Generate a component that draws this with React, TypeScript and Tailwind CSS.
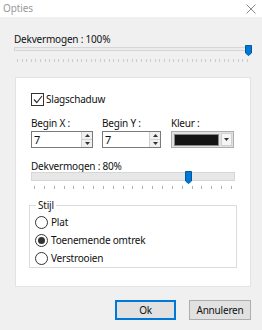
import React from "react";

const font = { fontFamily: '"Noto Sans", "Open Sans", sans-serif' };

const Ticks = ({ count, color }: { count: number; color: string }) => (
  <div className="flex justify-between px-[3px]">
    {Array.from({ length: count }).map((_, i) => (
      <div key={i} className={`w-px h-[3px] ${color}`} />
    ))}
  </div>
);

const Thumb = ({ h }: { h: number }) => (
  <svg width="7" height={h} viewBox={`0 0 7 ${h}`} className="block">
    <path d={`M0.5 0.5 H6.5 V${h - 3} L3.5 ${h - 0.5} L0.5 ${h - 3} Z`} fill="#0078d7" stroke="#005a9e" />
  </svg>
);

const Spinner = () => (
  <div className="flex flex-col w-[11px] h-full border-l border-[#d0d0d0] bg-[#f0f0f0]">
    <div className="flex-1 flex items-center justify-center border-b border-[#d0d0d0]">
      <svg width="5" height="3" viewBox="0 0 5 3"><path d="M0 3 L2.5 0 L5 3 Z" fill="#333" /></svg>
    </div>
    <div className="flex-1 flex items-center justify-center">
      <svg width="5" height="3" viewBox="0 0 5 3"><path d="M0 0 L2.5 3 L5 0 Z" fill="#333" /></svg>
    </div>
  </div>
);

const NumberBox = ({ width }: { width: string }) => (
  <div className={`${width} h-[17px] mt-px border border-[#7a7a7a] bg-white flex items-stretch`}>
    <div className="flex-1 pl-[2px] text-[11px] leading-[15px] text-[#111]">7</div>
    <Spinner />
  </div>
);

const Radio = ({ label, checked }: { label: string; checked?: boolean }) => (
  <div className="flex items-center gap-[3px] h-[18px]">
    <div className="w-[13px] h-[13px] rounded-full border border-[#333] bg-white flex items-center justify-center">
      {checked && <div className="w-[7px] h-[7px] rounded-full bg-[#333]" />}
    </div>
    <span className="text-[10px] tracking-[-0.2px] text-[#111]">{label}</span>
  </div>
);

export default function App() {
  return (
    <div className="relative w-[262px] h-[330px] overflow-hidden bg-[#f0f0f0]" style={font}>
      <div className="h-[17px] bg-white flex items-center justify-between pl-[3px] pr-[6px]">
        <span className="text-[10px] tracking-[-0.1px] text-[#9a9a9a]">Opties</span>
        <svg width="10" height="10" viewBox="0 0 10 10">
          <path d="M0.5 0.5 L9.5 9.5 M9.5 0.5 L0.5 9.5" stroke="#8a8a8a" strokeWidth="1" />
        </svg>
      </div>

      <div className="pl-[14px] pr-[11px] pt-[14px]">
        <div className="text-[10px] tracking-[-0.2px] leading-[16px] text-[#111]">Dekvermogen : 100%</div>
        <div className="relative h-[11px] -mt-[2px]">
          <div className="absolute left-0 right-0 top-[2px] h-[4px] border border-[#d6d6d6] bg-[#ececec]" />
          <div className="absolute right-[-1px] top-0">
            <Thumb h={11} />
          </div>
        </div>
        <div className="mt-[3px]">
          <Ticks count={51} color="bg-[#cccccc]" />
        </div>

        <div className="mt-[15px] ml-px w-[236px] h-[210px] bg-white border border-[#e3e3e3] pl-[15px] pt-[15px]">
          <div className="flex items-center gap-[2px] h-[13px]">
            <div className="w-[13px] h-[13px] border border-[#333] bg-white flex items-center justify-center">
              <svg width="10" height="9" viewBox="0 0 10 9">
                <path d="M1 4.5 L3.8 7.5 L9 1" fill="none" stroke="#333" strokeWidth="1.2" />
              </svg>
            </div>
            <span className="text-[10px] tracking-[-0.2px] text-[#111]">Slagschaduw</span>
          </div>

          <div className="flex mt-[10px]">
            <div className="w-[71px]">
              <div className="text-[10px] tracking-[-0.2px] leading-[14px] text-[#111]">Begin X :</div>
              <NumberBox width="w-[62px]" />
            </div>
            <div className="w-[69px]">
              <div className="text-[10px] tracking-[-0.2px] leading-[14px] text-[#111]">Begin Y :</div>
              <NumberBox width="w-[59px]" />
            </div>
            <div>
              <div className="text-[10px] tracking-[-0.2px] leading-[14px] text-[#111]">Kleur :</div>
              <div className="w-[63px] h-[17px] mt-px border border-[#adadad] bg-[#e1e1e1] flex items-center pl-[2px] pr-px gap-[2px]">
                <div className="w-[45px] h-[12px] bg-[#141414] border border-[#888]" />
                <div className="flex-1 h-[13px] bg-[#f5f5f5] border border-[#d0d0d0] flex items-center justify-center">
                  <svg width="5" height="3" viewBox="0 0 5 3"><path d="M0 0 L2.5 3 L5 0 Z" fill="#333" /></svg>
                </div>
              </div>
            </div>
          </div>

          <div className="text-[10px] tracking-[-0.2px] leading-[14px] text-[#111] mt-[11px]">Dekvermogen : 80%</div>
          <div className="relative h-[13px] w-[204px] -mt-[2px]">
            <div className="absolute left-0 right-0 top-px h-[9px] border border-[#d6d6d6] bg-[#e7e7e7]" />
            <div className="absolute left-[154px] top-0">
              <Thumb h={13} />
            </div>
          </div>
          <div className="w-[204px] mt-[2px]">
            <Ticks count={21} color="bg-[#b0b0b0]" />
          </div>

          <div className="relative mt-[16px] -ml-[2px] w-[208px] h-[63px] border border-[#dcdcdc] pl-[5px] pt-[7px]">
            <span className="absolute left-[6px] top-[-8px] bg-white px-[2px] text-[10px] tracking-[-0.2px] leading-[14px] text-[#111]">Stijl</span>
            <Radio label="Plat" />
            <Radio label="Toenemende omtrek" checked />
            <Radio label="Verstrooien" />
          </div>
        </div>

        <div className="flex justify-end gap-[13px] mt-[13px]">
          <button className="w-[61px] h-[20px] border border-[#0078d7] bg-[#e1e1e1] text-[10px] tracking-[-0.2px] text-[#111] flex items-center justify-center shadow-[inset_0_0_0_1px_#0078d7]">
            Ok
          </button>
          <button className="w-[62px] h-[20px] border border-[#adadad] bg-[#e1e1e1] text-[10px] tracking-[-0.2px] text-[#111] flex items-center justify-center">
            Annuleren
          </button>
        </div>
      </div>
    </div>
  );
}
